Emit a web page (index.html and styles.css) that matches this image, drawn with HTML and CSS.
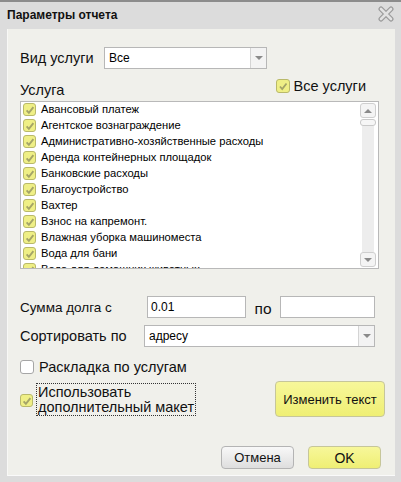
FILE: index.html
```html
<!DOCTYPE html>
<html lang="ru">
<head>
    <meta charset="UTF-8">
    <title>Параметры отчета</title>
    <link rel="stylesheet" href="styles.css">
</head>
<body>
    <div class="window">
        <div class="titlebar">
            <span class="title">Параметры отчета</span>
            <svg class="close" width="16" height="16" viewBox="0 0 16 16">
                <path d="M3 3 L13 13 M13 3 L3 13" stroke="#9a9a9a" stroke-width="5" stroke-linecap="round"/>
                <path d="M3 3 L13 13 M13 3 L3 13" stroke="#e2e2e2" stroke-width="2.6" stroke-linecap="round"/>
            </svg>
        </div>

        <div class="panel">
            <div class="row row-kind">
                <span class="label label-kind">Вид услуги</span>
                <div class="combo combo-kind">
                    <span class="combo-text">Все</span>
                    <span class="combo-btn"><i class="arrow-down"></i></span>
                </div>
            </div>

            <div class="row row-service">
                <span class="label label-service">Услуга</span>
                <label class="check-all"><span class="cb on"></span>Все услуги</label>
            </div>

            <div class="list">
                <div class="items" id="items"></div>
                <div class="scroll">
                    <div class="sbtn"><i class="arrow-up"></i></div>
                    <div class="thumb"></div>
                    <div class="track"></div>
                    <div class="sbtn"><i class="arrow-down"></i></div>
                </div>
            </div>

            <div class="row row-sum">
                <span class="label label-sum">Сумма долга с</span>
                <input class="field field-from" type="text" value="0.01">
                <span class="label label-to">по</span>
                <input class="field field-to" type="text" value="">
            </div>

            <div class="row row-sort">
                <span class="label label-sort">Сортировать по</span>
                <div class="combo combo-sort">
                    <span class="combo-text">адресу</span>
                    <span class="combo-btn"><i class="arrow-down"></i></span>
                </div>
            </div>

            <label class="row row-split"><span class="cb off"></span>Раскладка по услугам</label>

            <div class="row row-layout">
                <span class="cb on"></span>
                <span class="layout-text">Использовать<br>дополнительный макет</span>
                <button class="btn yellow btn-edit">Изменить текст</button>
            </div>

            <div class="row row-buttons">
                <button class="btn gray btn-cancel">Отмена</button>
                <button class="btn yellow btn-ok">OK</button>
            </div>
        </div>
    </div>

    <script>
        const services = [
            "Авансовый платеж",
            "Агентское вознаграждение",
            "Административно-хозяйственные расходы",
            "Аренда контейнерных площадок",
            "Банковские расходы",
            "Благоустройство",
            "Вахтер",
            "Взнос на капремонт.",
            "Влажная уборка машиноместа",
            "Вода для бани",
            "Вода для домашних животных"
        ];
        const itemsDiv = document.getElementById("items");
        services.forEach(name => {
            const row = document.createElement("div");
            row.className = "item";
            row.innerHTML = `<span class="cb on"></span><span>${name}</span>`;
            itemsDiv.appendChild(row);
        });
    </script>
</body>
</html>
```

FILE: styles.css
```css
body {
    margin: 0;
    font-family: "Liberation Sans", Arial, sans-serif;
    background: #dadada;
}

.window {
    width: 401px;
    height: 482px;
    box-sizing: border-box;
    border-top: 2px solid #8c8c8c;
    background: #dcdcdc;
}

.titlebar {
    height: 27px;
    display: flex;
    align-items: center;
    justify-content: space-between;
    padding: 0 8px 0 7px;
}

.title {
    font-size: 12px;
    font-weight: bold;
    color: #111;
    margin-top: -1px;
}

.close {
    margin-top: -3px;
    margin-right: -1px;
}

.panel {
    margin: 0 6px 0 7px;
    height: 447px;
    box-sizing: border-box;
    background: #f0f0eb;
    border-left: 1px solid #f8f8f6;
    border-bottom: 1px solid #fafafa;
    padding: 18px 0 6px 12px;
    display: flex;
    flex-direction: column;
}

.panel > * {
    flex-shrink: 0;
}

.row {
    display: flex;
    align-items: center;
}

.label {
    font-size: 14.5px;
    color: #111;
}

/* combo boxes */
.combo {
    display: flex;
    height: 22px;
    box-sizing: border-box;
    border: 1px solid #b7b7b7;
    background: #fff;
}

.combo-text {
    flex: 1;
    font-size: 12px;
    line-height: 20px;
    padding-left: 4px;
    color: #000;
}

.combo-btn {
    width: 15px;
    border-left: 1px solid #d4d4d4;
    background: #f3f3f3;
    display: flex;
    align-items: center;
    justify-content: center;
}

.arrow-down, .arrow-up {
    width: 0;
    height: 0;
    border-left: 4px solid transparent;
    border-right: 4px solid transparent;
}

.arrow-down {
    border-top: 4px solid #8a8a8a;
}

.arrow-up {
    border-bottom: 4px solid #8a8a8a;
}

.label-kind {
    width: 84px;
    font-size: 14.5px;
}

.combo-kind {
    width: 163px;
}

.row-service {
    height: 26px;
    margin-top: 6px;
    justify-content: space-between;
    width: 346px;
}

.label-service {
    margin-top: 3px;
}

.check-all {
    display: flex;
    align-items: center;
    font-size: 14.5px;
    color: #111;
    margin-top: -4px;
}

.check-all .cb {
    margin-right: 4px;
}

/* checkboxes */
.cb {
    width: 14px;
    height: 14px;
    box-sizing: border-box;
    border-radius: 3px;
    display: inline-block;
    flex: none;
}

.cb.on {
    background: #efef86 url("data:image/svg+xml,%3Csvg xmlns='http://www.w3.org/2000/svg' width='12' height='12'%3E%3Cpath d='M3 6.5 L5.2 9 L9.5 3.5' fill='none' stroke='%23a4a468' stroke-width='1.8'/%3E%3C/svg%3E") no-repeat center;
    border: 1px solid #b9b96a;
}

.cb.off {
    background: #fff;
    border: 1px solid #a6a6a6;
}

/* list */
.list {
    width: 359px;
    height: 168px;
    box-sizing: border-box;
    border: 1px solid #b9b9b9;
    background: #fff;
    display: flex;
    overflow: hidden;
}

.items {
    flex: 1;
    margin-top: -1px;
    padding: 0 0 0 2px;
    overflow: hidden;
}

.item {
    height: 16px;
    display: flex;
    align-items: center;
    font-size: 11.2px;
    color: #000;
    white-space: nowrap;
}

.item .cb {
    width: 13px;
    height: 13px;
    margin-right: 5px;
}

.scroll {
    width: 16px;
    margin-right: 2px;
    display: flex;
    flex-direction: column;
    padding: 1px 0;
}

.sbtn {
    height: 15px;
    box-sizing: border-box;
    border: 1px solid #cfcfcf;
    border-radius: 3px;
    background: #f4f4f4;
    display: flex;
    align-items: center;
    justify-content: center;
}

.thumb {
    height: 7px;
    margin-top: 1px;
    box-sizing: border-box;
    border: 1px solid #c9c9c9;
    border-radius: 3px;
    background: #f6f6f6;
}

.track {
    flex: 1;
    background: #ededed;
    margin: 0 2px;
}

/* debt sum */
.row-sum {
    margin-top: 27px;
}

.label-sum {
    width: 127px;
    font-size: 13.5px;
}

.field {
    height: 22px;
    box-sizing: border-box;
    border: 1px solid #b7b7b7;
    background: #fff;
    font-family: "Liberation Sans", Arial, sans-serif;
    font-size: 12px;
    padding: 0 3px;
    outline: none;
}

.field-from {
    width: 99px;
}

.label-to {
    width: 34px;
    text-align: center;
    font-size: 15.5px;
    padding-top: 3px;
}

.field-to {
    width: 95px;
}

.row-sort {
    margin-top: 7px;
}

.label-sort {
    width: 124px;
}

.combo-sort {
    width: 231px;
}

.row-split {
    margin-top: 12px;
    font-size: 14.5px;
    color: #111;
}

.row-split .cb {
    width: 14px;
    height: 14px;
    margin-right: 5px;
}

.row-layout {
    margin-top: 6px;
    width: 365px;
}

.row-layout .cb {
    width: 13px;
    height: 13px;
    margin-top: 2px;
}

.layout-text {
    font-size: 14.5px;
    line-height: 15px;
    color: #111;
    border: 1px dotted #333;
    padding: 1px 1px 0 1px;
    margin-left: 3px;
    white-space: nowrap;
}

/* buttons */
.btn {
    font-family: "Liberation Sans", Arial, sans-serif;
    font-size: 13px;
    color: #111;
    border-radius: 4px;
    cursor: pointer;
    padding: 0;
}

.btn.yellow {
    background: linear-gradient(#f7f79a, #efef74);
    border: 1px solid #c6c69a;
}

.btn.gray {
    background: linear-gradient(#f8f8f8, #dedede);
    border: 1px solid #b4b4b4;
}

.btn-edit {
    width: 110px;
    height: 36px;
    margin-left: auto;
}

.row-buttons {
    margin-top: auto;
    padding-left: 201px;
}

.btn-cancel, .btn-ok {
    width: 73px;
    height: 23px;
    font-size: 14px;
}

.btn-cancel {
    font-size: 13px;
}

.btn-ok {
    margin-left: 14px;
}
```
